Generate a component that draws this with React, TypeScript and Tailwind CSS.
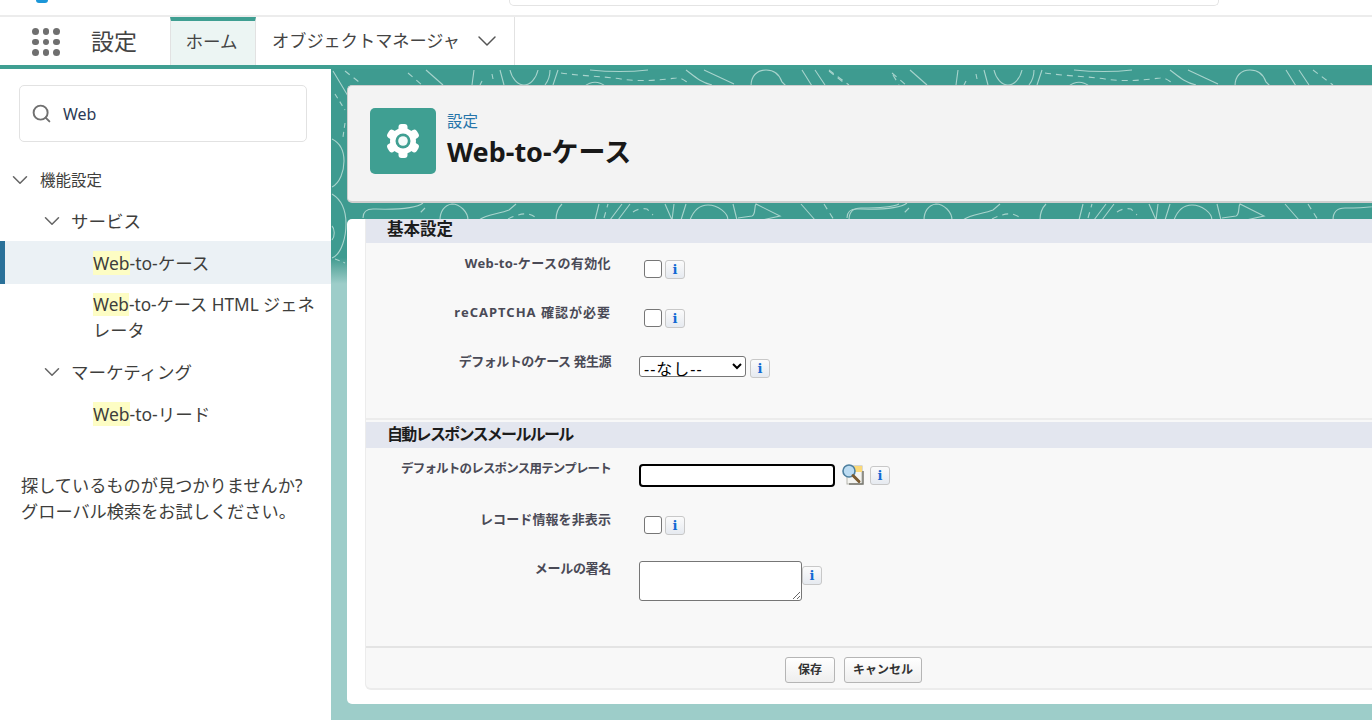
import { ChevronDown, Search } from "lucide-react";

const font = { fontFamily: '"Noto Sans", "Noto Sans CJK JP", sans-serif' };

const Mark = ({ children }: { children: string }) => (
  <span className="bg-[#fdfdc4]">{children}</span>
);

const InfoButton = () => (
  <span
    className="flex h-[19px] w-[20px] shrink-0 items-center justify-center rounded-[3px] border border-[#c8c8c8] bg-gradient-to-b from-[#fbfbfb] to-[#e6eaf0] text-[13px] font-bold text-[#1269d3]"
    style={{ fontFamily: '"DejaVu Serif", serif' }}
  >
    i
  </span>
);

const CheckBox = () => (
  <span className="ml-[5px] h-[18px] w-[18px] shrink-0 rounded-[3px] border border-[#767676] bg-white" />
);

const LookupIcon = () => (
  <svg width="23" height="22" viewBox="0 0 23 22" className="shrink-0">
    <rect x="6" y="2" width="15" height="18" fill="#f4f4f0" stroke="#b5b5ad" />
    <rect x="13" y="2" width="8" height="6" fill="#fbd978" />
    <path d="M8 20h14V7" fill="none" stroke="#77776f" strokeWidth="1.5" />
    <circle cx="8" cy="7" r="6" fill="#bcdcf2" stroke="#4d7f9f" strokeWidth="1.6" />
    <path d="M12 11.5l6 6" stroke="#7a5a30" strokeWidth="3" strokeLinecap="round" />
  </svg>
);

const GearIcon = () => (
  <svg width="36" height="38" viewBox="0 0 36 38">
    <g fill="#fff">
      <circle cx="18" cy="19" r="13" />
      {[0, 60, 120, 180, 240, 300].map((deg) => (
        <rect key={deg} x="13.5" y="2" width="9" height="9" rx="3" transform={`rotate(${deg} 18 19)`} />
      ))}
    </g>
    <circle cx="18" cy="19" r="7.5" fill="#3f9f92" />
    <circle cx="18" cy="19" r="4.8" fill="#f4fbfa" />
  </svg>
);

// contour lines of the page background, in screenshot coordinates; the strip repeats every 484px
const solidLines = [
  "M426 70l17 15",
  "M474 70l-2 15M482 81l-2 4M492 74l1 5M500 70l4 15",
  "M510 70c2 9 8 15 14 15s12-6 14-15M550 70c0 5-1 10-5 15M558 70l-5 15",
  "M590 70c20 2 40 2 58 0M585 86c6-5 14-5 20 0",
  "M686 70c8 6 14 12 26 15M704 70l30 14",
  "M751 86c0-10 6-16 15-16s14 6 16 12l4 4",
  "M802 70l10 16M815 70l10 15",
  "M363 218c0-6 4-9 10-9s40 2 50-6",
  "M440 220c0-8 4-15 12-16 8 0 16 8 16 16",
  "M479 220c8-6 20-6 30-10l7-6",
  "M556 220c0-6 2-12 6-16",
  "M595 220l4-16M610 220l12-16M618 220l12-16",
  "M665 204l7 16M674 204l-2 16M681 220l5-16",
  "M690 220c3-8 8-15 18-15s20 8 20 15M733 204l4 16",
  "M738 218l14-2c4-1 2-10 4-12l24 12-18 4",
  "M801 204l14 16",
  "M849 220c0-8 4-12 12-12s30 0 38-4",
];

const dashedLines = [
  "M345 71l14 11",
  "M408 73l14 12",
  "M561 73c20 3 40 3 60 6s40 1 55-1c6-1 10 4 14 6",
  "M829 70l20 15",
  "M893 75l6 10",
  "M425 208l-5 5",
  "M508 219c6-3 14-6 20-5 4 1 8 3 10 6",
  "M604 218l4-14",
  "M633 212c4-3 10-4 14-3l6 6",
  "M824 204l10 16",
];

const FormRow = ({
  label,
  labelClass = "text-[13px]",
  pt,
  height,
  children,
}: {
  label: string;
  labelClass?: string;
  pt: string;
  height: string;
  children: React.ReactNode;
}) => (
  <div className={`grid grid-cols-[245px_1fr] gap-x-[28px] ${height}`}>
    <div className={`text-right leading-[16px] font-bold text-[#4a4a56] ${labelClass} ${pt}`}>
      {label}
    </div>
    {children}
  </div>
);

export default function App() {
  return (
    <div className="flex h-[720px] w-[1372px] flex-col overflow-hidden bg-white" style={font}>
      {/* global header, cut off at the top */}
      <div className="flex h-[17px] shrink-0 items-start border-b-2 border-[#ececec]">
        <div className="ml-[36px] h-[3px] w-[12px] rounded-b-full bg-[#1b96d8]" />
        <div className="ml-[461px] h-[6px] w-[710px] rounded-b-[5px] border border-t-0 border-[#e4e4e4]" />
      </div>

      {/* app nav */}
      <nav className="flex h-[52px] shrink-0 border-b-4 border-[#3f9f92] text-[#444]">
        <div className="ml-[32px] mt-[11px] grid h-[28px] w-[28px] grid-cols-3 gap-[4px]">
          {Array.from({ length: 9 }).map((_, i) => (
            <span key={i} className="h-[6.5px] w-[6.5px] rounded-full bg-[#6f6f6f]" />
          ))}
        </div>
        <div className="ml-[31px] mt-[3px] w-[79px] text-[23px] leading-[42px]">設定</div>
        <div className="flex w-[86px] items-center justify-center border-x border-t-4 border-x-[#e2e2e2] border-t-[#3f9f92] bg-[#ecf5f3] pr-[3px] pb-[3px] text-[17.5px]">
          ホーム
        </div>
        <div className="flex w-[259px] items-center border-r border-[#e2e2e2] pl-[16px] pb-[1px] text-[17.2px]">
          オブジェクトマネージャ
          <ChevronDown size={32} strokeWidth={1.1} className="ml-[11px] text-[#555]" />
        </div>
      </nav>

      <div className="flex min-h-0 flex-1">
        {/* setup tree */}
        <aside className="w-[331px] shrink-0 bg-white pt-[16px] text-[#3e3e3c]">
          <div className="ml-[19px] flex h-[57px] w-[288px] items-center rounded-[5px] border border-[#e2e2e2] pl-[11px] text-[16px]">
            <Search size={21} strokeWidth={2.2} className="text-[#707070]" />
            <span className="ml-[11px] pt-[1px] text-[#2b3a55]">Web</span>
          </div>
          <div className="mt-[22px] flex h-[32px] items-center pl-[7px] text-[15.5px]">
            <ChevronDown size={26} strokeWidth={1.4} className="text-[#666]" />
            <span className="ml-[7px] pt-[1px]">機能設定</span>
          </div>
          <div className="mt-[9px] flex h-[32px] items-center pl-[39px] text-[17.5px]">
            <ChevronDown size={26} strokeWidth={1.4} className="text-[#666]" />
            <span className="ml-[6px]">サービス</span>
          </div>
          <div className="mt-[4px] flex h-[43px] items-center border-l-[5px] border-[#2a7199] bg-[#ebf1f5] pl-[88px] pt-[1px] text-[17.5px]">
            <span>
              <Mark>Web</Mark>-to-ケース
            </span>
          </div>
          <div className="pt-[8px] pl-[93px] pr-[12px] text-[17.2px] leading-[26px]">
            <Mark>Web</Mark>-to-ケース HTML ジェネレータ
          </div>
          <div className="mt-[12px] flex h-[32px] items-center pl-[39px] text-[17.5px]">
            <ChevronDown size={26} strokeWidth={1.4} className="text-[#666]" />
            <span className="ml-[6px]">マーケティング</span>
          </div>
          <div className="mt-[10px] flex h-[32px] items-center pl-[93px] text-[17.5px]">
            <span>
              <Mark>Web</Mark>-to-リード
            </span>
          </div>
          <p className="mt-[43px] pl-[21px] text-[17.2px] leading-[26px]">
            探しているものが見つかりませんか?
            <br />
            グローバル検索をお試しください。
          </p>
        </aside>

        {/* setup content */}
        <main className="relative min-w-0 flex-1 overflow-hidden bg-gradient-to-b from-[#3e9b90] from-[29%] to-[#9dcdc9] to-[33%] pt-[16px] pl-[16px]">
          <svg
            className="absolute inset-0"
            width="1041"
            height="651"
            viewBox="331 69 1041 651"
            fill="none"
            stroke="#a9d4cd"
            strokeWidth="1.1"
          >
            {[0, 484].map((dx) => (
              <g key={dx} transform={`translate(${dx} 0)`}>
                {solidLines.map((d, i) => (
                  <path key={i} d={d} />
                ))}
                {dashedLines.map((d, i) => (
                  <path key={i} d={d} strokeDasharray="6 5" />
                ))}
              </g>
            ))}
            <path d="M333 71l15 25M332 139c8 4 12 12 12 22s-4 22-12 26M332 194c10 6 14 18 14 30s-4 30-14 34M332 226c3 3 3 10 0 14" />
            <path d="M335 94l10 16M345 123l-2 14M335 259l10 4" strokeDasharray="5 4" />
          </svg>

          <header className="relative flex h-[118px] items-start rounded-l-[5px] border border-r-0 border-b-2 border-[#cfcfcf] bg-[#f3f3f3] pt-[22px] pl-[22px]">
            <div className="flex h-[66px] w-[66px] items-center justify-center rounded-[5px] bg-[#3f9f92]">
              <GearIcon />
            </div>
            <div className="ml-[11px]">
              <div className="mt-[2px] text-[15.5px] leading-[22px] text-[#2574a9]">設定</div>
              <h1 className="mt-[2px] text-[27px] leading-[36px] font-bold text-[#181818]">
                Web-to-ケース
              </h1>
            </div>
          </header>

          <section className="relative mt-[16px] h-[485px] rounded-l-[5px] bg-white pb-[14px] pl-[18px]">
            <div className="flex h-[471px] flex-col rounded-bl-[6px] border-b-2 border-l border-[#ececec] bg-[#f8f8f8]">
              <div className="flex h-[24px] items-center bg-[#e3e6ef] pb-[4px] pl-[21px] text-[16.5px] font-bold text-[#1c1c1c]">
                基本設定
              </div>
              <FormRow label="Web-to-ケースの有効化" labelClass="text-[13px] tracking-[0.4px]" pt="pt-[12px]" height="h-[50px]">
                <div className="flex items-start gap-[3px] pt-[17px]">
                  <CheckBox />
                  <InfoButton />
                </div>
              </FormRow>
              <FormRow label="reCAPTCHA 確認が必要" labelClass="text-[13px] tracking-[1px]" pt="pt-[11px]" height="h-[49px]">
                <div className="flex items-start gap-[3px] pt-[16px]">
                  <CheckBox />
                  <InfoButton />
                </div>
              </FormRow>
              <FormRow label="デフォルトのケース 発生源" labelClass="text-[13px] tracking-[-0.5px]" pt="pt-[11px]" height="h-[76px]">
                <div className="flex items-start gap-[4px] pt-[14px]">
                  <select className="h-[21px] w-[107px] rounded-[3px] border border-[#767676] bg-white text-[16px] leading-[18px] tracking-[1px] text-black">
                    <option>--なし--</option>
                  </select>
                  <span className="mt-[3px]">
                    <InfoButton />
                  </span>
                </div>
              </FormRow>
              <div className="h-[2px] bg-[#ececec]" />
              <div className="h-[2px]" />
              <div className="flex h-[26px] items-center bg-[#e3e6ef] pb-[3px] pl-[21px] text-[16px] font-bold tracking-[-1.7px] text-[#1c1c1c]">
                自動レスポンスメールルール
              </div>
              <FormRow label="デフォルトのレスポンス用テンプレート" labelClass="text-[12.5px] tracking-[-0.8px]" pt="pt-[13px]" height="h-[52px]">
                <div className="flex items-start pt-[16px]">
                  <div className="h-[23px] w-[196px] rounded-[4px] border-2 border-black bg-white" />
                  <span className="ml-[6px]">
                    <LookupIcon />
                  </span>
                  <span className="ml-[6px] mt-[2px]">
                    <InfoButton />
                  </span>
                </div>
              </FormRow>
              <FormRow label="レコード情報を非表示" labelClass="text-[13px] tracking-[0.1px]" pt="pt-[11px]" height="h-[48px]">
                <div className="flex items-start gap-[3px] pt-[16px]">
                  <CheckBox />
                  <InfoButton />
                </div>
              </FormRow>
              <FormRow label="メールの署名" labelClass="text-[13px] tracking-[-0.3px]" pt="pt-[12px]" height="h-[98px]">
                <div className="flex items-start pt-[13px]">
                  <textarea className="h-[40px] w-[163px] rounded-[3px] border border-[#767676] bg-white" />
                  <span className="mt-[5px]">
                    <InfoButton />
                  </span>
                </div>
              </FormRow>
              <div className="flex flex-1 items-start border-t-2 border-[#e4e4e4] pt-[9px] pl-[419px]">
                <button className="h-[26px] w-[50px] rounded-[3px] border border-[#b5b5b5] bg-gradient-to-b from-white to-[#eeeeee] text-[12px] font-bold text-[#333]">
                  保存
                </button>
                <button className="ml-[9px] h-[26px] w-[78px] rounded-[3px] border border-[#b5b5b5] bg-gradient-to-b from-white to-[#eeeeee] text-[12px] font-bold text-[#333]">
                  キャンセル
                </button>
              </div>
            </div>
          </section>
        </main>
      </div>
    </div>
  );
}
